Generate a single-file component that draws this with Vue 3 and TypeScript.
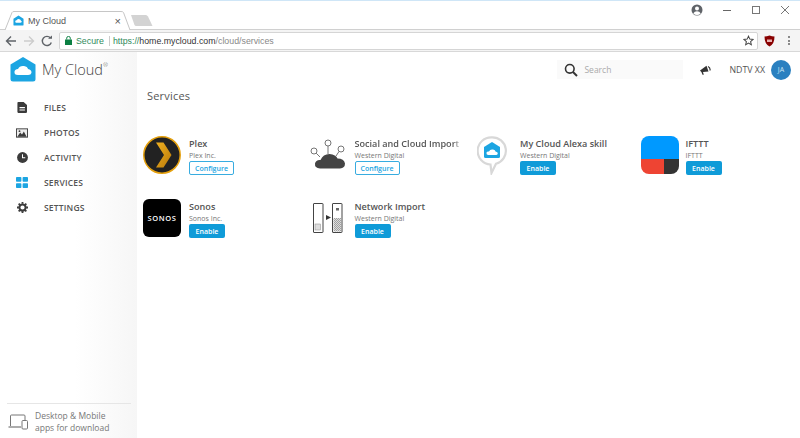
<script setup lang="ts">
interface Service {
  id: string
  title: string
  vendor: string
  action: 'Configure' | 'Enable'
}
const services: Service[] = [
  { id: 'plex', title: 'Plex', vendor: 'Plex Inc.', action: 'Configure' },
  { id: 'social', title: 'Social and Cloud Import', vendor: 'Western Digital', action: 'Configure' },
  { id: 'alexa', title: 'My Cloud Alexa skill', vendor: 'Western Digital', action: 'Enable' },
  { id: 'ifttt', title: 'IFTTT', vendor: 'IFTTT', action: 'Enable' },
  { id: 'sonos', title: 'Sonos', vendor: 'Sonos Inc.', action: 'Enable' },
  { id: 'network', title: 'Network Import', vendor: 'Western Digital', action: 'Enable' },
]
const nav = [
  { id: 'files', label: 'FILES' },
  { id: 'photos', label: 'PHOTOS' },
  { id: 'activity', label: 'ACTIVITY' },
  { id: 'services', label: 'SERVICES' },
  { id: 'settings', label: 'SETTINGS' },
]
</script>

<template>
  <div class="window">
    <div class="tabstrip">
      <div class="tab">
        <svg class="tab-shape" width="127" height="19" viewBox="0 0 127 19">
          <path d="M1 19 L8 1.500 Q8.500 .5 10 .5 L117 .5 Q119 .5 119.500 1.500 L126 19 Z" fill="#fff" />
          <path d="M1 19 L8 1.500 Q8.500 .5 10 .5 L117 .5 Q119 .5 119.500 1.500 L126 19" fill="none" stroke="#c6c6c6" />
        </svg>
        <svg class="fav" width="11" height="11" viewBox="0 0 24 24">
          <path d="M12 1 L23 8 V21 Q23 23 21 23 H3 Q1 23 1 21 V8 Z" fill="#1ca5e2" />
          <path d="M7 17 Q4 16 5 13 Q6 11 8 11.500 Q10 8 14 9 Q17 10 17 12 Q20 13 19 15.500 Q18 17 16 17 Z" fill="#fff" />
        </svg>
        <span class="tab-title">My Cloud</span>
        <span class="tab-x">×</span>
      </div>
      <svg class="newtab" width="22" height="11" viewBox="0 0 22 11"><path d="M0 0H15Q16 0 17 1.500L21.500 11H5Q4 11 3.500 10Z" fill="#d3d3d3" /></svg>
      <div class="win-controls">
        <svg width="12" height="12" viewBox="0 0 24 24"><circle cx="12" cy="12" r="11" fill="#5f6368" /><circle cx="12" cy="9" r="4" fill="#fff" /><path d="M4.500 19 Q7 14.500 12 14.500 Q17 14.500 19.500 19 Q16 22 12 22 Q8 22 4.500 19Z" fill="#fff" /></svg>
        <svg class="wc-min" width="10" height="10" viewBox="0 0 10 10"><path d="M1 5.500H9" stroke="#666" /></svg>
        <svg class="wc-max" width="10" height="10" viewBox="0 0 10 10"><rect x="1.500" y="1.500" width="7" height="7" fill="none" stroke="#777" /></svg>
        <svg class="wc-close" width="10" height="10" viewBox="0 0 10 10"><path d="M1 1L9 9M9 1L1 9" stroke="#777" /></svg>
      </div>
    </div>
    <div class="toolbar">
      <svg class="tb-icon" width="12" height="12" viewBox="0 0 12 12"><path d="M11 6H2M6 1.500L1.500 6L6 10.500" fill="none" stroke="#5f6368" stroke-width="1.400" /></svg>
      <svg class="tb-icon" width="12" height="12" viewBox="0 0 12 12"><path d="M1 6H10M6 1.500L10.500 6L6 10.500" fill="none" stroke="#ccc" stroke-width="1.400" /></svg>
      <svg class="tb-icon" width="12" height="12" viewBox="0 0 12 12"><path d="M10.300 7.500A4.600 4.600 0 1 1 9.500 3" fill="none" stroke="#5f6368" stroke-width="1.400" /><path d="M7 3.800H11V0.400Z" fill="#5f6368" /></svg>
      <div class="omnibox">
        <svg class="lock" width="7" height="9" viewBox="0 0 7 9"><path d="M0 3.500H7V9H0Z" fill="#0b8043" /><path d="M1.700 3.500V2.200A1.800 1.800 0 0 1 5.300 2.200V3.500" fill="none" stroke="#0b8043" /></svg>
        <span class="secure">Secure</span>
        <span class="omni-sep"></span>
        <span class="url"><span class="https">https://</span><span class="host">home.mycloud.com</span><span class="path">/cloud/services</span></span>
        <svg class="star" width="11" height="11" viewBox="0 0 24 24"><path d="M12 2.500L14.900 9L22 9.700L16.600 14.400L18.200 21.400L12 17.700L5.800 21.400L7.400 14.400L2 9.700L9.100 9Z" fill="none" stroke="#444" stroke-width="2.200" /></svg>
      </div>
      <svg class="ublock" width="11" height="12" viewBox="0 0 11 12"><path d="M.5 1.500Q3 1.500 5.500 .5Q8 1.500 10.500 1.500Q10.500 9 5.500 11.500Q.5 9 .5 1.500Z" fill="#800" /><rect x="3" y="4.500" width="5" height="2.500" fill="#e8b0b0" /></svg>
      <span class="kebab"><i></i><i></i><i></i></span>
    </div>

    <div class="app">
      <aside class="sidebar">
        <div class="brand">
          <svg width="26" height="25" viewBox="0 0 26 25">
            <path d="M13 0 L25.500 7.500 V22 Q25.500 24.500 23 24.500 H3 Q.5 24.500 .5 22 V7.500 Z" fill="#1ca5e2" />
            <path d="M8 18 Q4 18 4.500 14.500 Q5 12 8 12 Q9.500 8.500 14 9 Q17.500 9.500 18 12 Q21.500 12.500 21.500 15.500 Q21 18 18 18 Z" fill="#fff" />
          </svg>
          <span class="brand-name">My Cloud<sup>®</sup></span>
        </div>
        <nav class="nav">
          <div v-for="item in nav" :key="item.id" class="nav-item">
            <span class="nav-icon">
              <svg v-if="item.id === 'files'" width="10" height="11" viewBox="0 0 12 13"><path d="M1.500 0H8L12 3.500V12Q12 13 11 13H1.500Q.5 13 .5 12V1Q.5 0 1.500 0Z" fill="#3b3b3b" /><path d="M3 6H9.500V7.300H3ZM3 8.800H9.500V10.100H3Z" fill="#fff" /></svg>
              <svg v-else-if="item.id === 'photos'" width="13" height="10" viewBox="0 0 13 10"><rect x=".5" y=".5" width="12" height="9" fill="#eee" stroke="#3b3b3b" /><path d="M1.500 9L4.500 4.500L6.500 6.500L8.500 3.500L11.500 9Z" fill="#3b3b3b" /><circle cx="3.800" cy="3" r="1" fill="#3b3b3b" /></svg>
              <svg v-else-if="item.id === 'activity'" width="11" height="11" viewBox="0 0 12 12"><circle cx="6" cy="6" r="5.900" fill="#3b3b3b" /><path d="M6 2.500V6.300H9" fill="none" stroke="#fff" stroke-width="1.100" /></svg>
              <svg v-else-if="item.id === 'services'" width="12" height="11" viewBox="0 0 12 11"><rect x="0" y="0" width="5.400" height="4.800" rx=".8" fill="#1ca5e2" /><rect x="6.600" y="0" width="5.400" height="4.800" rx=".8" fill="#1ca5e2" /><rect x="0" y="6.200" width="5.400" height="4.800" rx=".8" fill="#1ca5e2" /><rect x="6.600" y="6.200" width="5.400" height="4.800" rx=".8" fill="#1ca5e2" /></svg>
              <svg v-else width="11" height="11" viewBox="0 0 12 12"><circle cx="6" cy="6" r="3.400" fill="none" stroke="#3b3b3b" stroke-width="2.200" /><path d="M6 0V2M6 10V12M0 6H2M10 6H12M1.800 1.800L3.200 3.200M8.800 8.800L10.200 10.200M1.800 10.200L3.200 8.800M8.800 3.200L10.200 1.800" stroke="#3b3b3b" stroke-width="2" /></svg>
            </span>
            <span class="nav-label">{{ item.label }}</span>
          </div>
        </nav>
        <div class="download">
          <svg width="21" height="16" viewBox="0 0 21 16"><path d="M2.500 12V2Q2.500 1 3.500 1H16Q17 1 17 2V6" fill="none" stroke="#777" /><path d="M.5 13H13" stroke="#777" stroke-width="1.200" /><rect x="14" y="6.500" width="5.500" height="8.500" rx="1" fill="none" stroke="#777" /></svg>
          <span class="download-text">Desktop &amp; Mobile<br />apps for download</span>
        </div>
      </aside>

      <main class="main">
        <header class="topbar">
          <div class="search">
            <svg width="14" height="14" viewBox="0 0 14 14"><circle cx="5.800" cy="5.800" r="4.300" fill="none" stroke="#333" stroke-width="1.600" /><path d="M9 9L13 13" stroke="#333" stroke-width="1.900" /></svg>
            <span class="search-text">Search</span>
          </div>
          <svg class="megaphone" width="11" height="10" viewBox="0 0 11 10"><path d="M0 5.500L6.500 .8L8.500 6.500L3 7L3.800 9.800H2.500L1.500 7.200Z" fill="#333" /><path d="M8 1.500Q10.500 2.500 10 5.500" fill="none" stroke="#333" stroke-width="1.200" /></svg>
          <span class="user">NDTV XX</span>
          <span class="avatar">JA</span>
        </header>
        <h1 class="heading">Services</h1>
        <section class="grid">
          <article v-for="s in services" :key="s.id" class="card" :class="'card-' + s.id">
            <div class="logo">
              <svg v-if="s.id === 'plex'" width="38" height="38" viewBox="0 0 38 38">
                <defs><linearGradient id="plexg" x1="0" y1="0" x2="1" y2="1"><stop offset="0" stop-color="#f0b020" /><stop offset="1" stop-color="#b97a0a" /></linearGradient></defs>
                <circle cx="19" cy="19" r="18.200" fill="#222" stroke="#e5a00d" stroke-width="1.500" />
                <path d="M13 6.500H20.500L28.500 19L20.500 31.500H13L21 19Z" fill="url(#plexg)" />
              </svg>
              <svg v-else-if="s.id === 'social'" width="38" height="36" viewBox="0 0 38 36">
                <g fill="none" stroke="#666" stroke-width=".9"><circle cx="5" cy="14" r="3" /><circle cx="19" cy="6" r="3" /><circle cx="32" cy="12" r="3" /><path d="M7.200 16.200L11 20M19 9V17M30 14.500L27 19" /></g>
                <path d="M11 31.500Q5.500 31 6 26.500Q7 22.500 11.500 23Q14 17 20.500 17Q27 17.500 28.500 21.500Q35 21.500 36 26.500Q36 31 31 31.500Z" fill="#444" />
              </svg>
              <svg v-else-if="s.id === 'alexa'" width="30" height="39" viewBox="0 0 30 39">
                <path d="M15 1.300A13.500 13.500 0 0 1 19 27.800L14.500 37L13.500 28.500A13.500 13.500 0 0 1 15 1.300Z" fill="#fff" stroke="#d8d8d8" stroke-width="2.200" />
                <path d="M15 6L23 11V20.500Q23 22 21.500 22H8.500Q7 22 7 20.500V11Z" fill="#1ca5e2" />
                <path d="M11 19Q9 18.500 9.500 16.500Q10.300 15 12 15.500Q13 13 16 13.500Q18.500 14 18.500 15.500Q21 16 20.800 17.800Q20.300 19 19 19Z" fill="#fff" />
              </svg>
              <div v-else-if="s.id === 'ifttt'" class="ifttt"><span class="i-blue"></span><span class="i-red"></span><span class="i-dark"></span></div>
              <div v-else-if="s.id === 'sonos'" class="sonos">SONOS</div>
              <svg v-else width="38" height="34" viewBox="0 0 38 34">
                <defs><pattern id="hatch" width="2" height="2" patternUnits="userSpaceOnUse"><rect width="2" height="2" fill="#ddd" /><path d="M0 2L2 0" stroke="#777" stroke-width=".6" /></pattern></defs>
                <rect x="4.500" y="3.500" width="9.500" height="29" rx=".5" fill="#fff" stroke="#444" />
                <rect x="6" y="24" width="5.500" height="6" fill="#ddd" stroke="#888" stroke-width=".5" />
                <path d="M17 15L22 17.500L17 20Z" fill="#333" />
                <rect x="23.500" y="3.500" width="9.500" height="29" rx=".5" fill="#fff" stroke="#444" />
                <rect x="24.500" y="18" width="7.500" height="13.500" fill="url(#hatch)" />
                <rect x="27" y="8" width="3" height="2.500" fill="#666" />
              </svg>
            </div>
            <div class="info">
              <div class="title">{{ s.title }}</div>
              <div class="vendor">{{ s.vendor }}</div>
              <button class="btn" :class="s.action === 'Enable' ? 'btn-fill' : 'btn-line'">{{ s.action }}</button>
            </div>
          </article>
        </section>
      </main>
    </div>
  </div>
</template>

<style>
html, body { margin: 0; background: #fff; }
</style>

<style scoped>
.window { width: 800px; height: 438px; display: flex; flex-direction: column; overflow: hidden; font-family: "Open Sans", "Liberation Sans", sans-serif; color: #444; }
.tabstrip { flex: none; display: flex; align-items: flex-end; border-top: 1px solid #cfe6f7; border-bottom: 1px solid #d0d0d0; position: relative; box-sizing: border-box; height: 30px; padding-left: 4px; }
.tab { width: 127px; height: 19px; position: relative; display: flex; align-items: center; padding-left: 9px; box-sizing: border-box; margin-bottom: -1px; }
.tab-shape { position: absolute; left: 0; top: 0; overflow: visible; }
.fav { position: relative; }
.tab-title { position: relative; margin-left: 4px; font: 9px "Liberation Sans", sans-serif; color: #555; flex: 1; }
.tab-x { position: relative; font: 11px "Liberation Sans", sans-serif; color: #555; margin-right: 10px; }
.newtab { margin: 0 0 3px 0; flex: none; }
.win-controls { margin-left: auto; align-self: flex-start; display: flex; align-items: center; margin-top: 3px; padding-right: 10px; }
.wc-min { margin-left: 19px; }
.wc-max { margin-left: 19px; }
.wc-close { margin-left: 19px; }
.toolbar { height: 22px; flex: none; display: flex; align-items: center; background: #f4f4f4; border-bottom: 1px solid #d8d8d8; box-sizing: border-box; padding-left: 5px; }
.tb-icon { margin-right: 5px; }
.tb-icon + .tb-icon { margin-left: 1px; }
.omnibox { width: 699px; height: 18px; margin-left: 1px; background: #fff; border: 1px solid #d5d5d5; border-radius: 2px; box-sizing: border-box; display: flex; align-items: center; padding: 0 3px 0 5px; font: 9px "Liberation Sans", sans-serif; }
.secure { color: #2f8a5b; margin-left: 4px; font-size: 8.800px; }
.omni-sep { width: 1px; height: 10px; background: #ccc; margin: 0 3px 0 5px; }
.https { color: #2f8a5b; }
.host { color: #333; }
.path { color: #888; }
.url { font-size: 8.800px; flex: 1; }
.ublock { margin-left: 6px; }
.kebab { margin-left: 13px; display: flex; flex-direction: column; gap: 1.500px; }
.kebab i { width: 2px; height: 2px; background: #666; border-radius: 50%; display: block; }
.app { flex: 1; display: flex; min-height: 0; }
.sidebar { width: 137px; flex: none; display: flex; flex-direction: column; background: linear-gradient(to right, #fff 55%, #f6f6f6); }
.brand { display: flex; align-items: center; height: 34px; padding-left: 10px; box-sizing: border-box; }
.brand-name { margin-left: 6px; font-size: 14.500px; font-weight: 300; color: #444; }
.brand-name sup { font-size: 6px; vertical-align: 8px; line-height: 0; }
.nav { margin-top: 9px; display: flex; flex-direction: column; }
.nav-item { height: 25px; display: flex; align-items: center; }
.nav-icon { width: 12px; margin: 0 16px; display: flex; justify-content: center; }
.nav-label { font-size: 8.500px; font-weight: 600; color: #555; letter-spacing: .2px; }
.download { margin-top: auto; margin-left: 7px; margin-right: 6px; border-top: 1px solid #e6e6e6; height: 35px; display: flex; align-items: center; gap: 6px; padding: 2px 0 0 1px; box-sizing: border-box; }
.download-text { font-size: 8.500px; line-height: 12px; color: #777; }
.main { flex: 1; min-width: 0; padding-left: 6px; }
.topbar { height: 36px; display: flex; align-items: center; box-sizing: border-box; padding: 0 9px 1px 0; justify-content: flex-end; }
.search { width: 126px; height: 19px; background: #fafafa; display: flex; align-items: center; box-sizing: border-box; padding-left: 7px; }
.search-text { margin-left: 6px; font-size: 8.500px; color: #aaa; }
.megaphone { margin-left: 17px; }
.user { margin-left: 18px; font-size: 8.800px; color: #555; }
.avatar { margin-left: 6px; width: 20px; height: 20px; border-radius: 50%; background: #2a80c0; color: #cfe6f5; font-size: 7px; display: flex; align-items: center; justify-content: center; }
.heading { margin: 1px 0 0 4px; font-size: 11px; line-height: 14px; font-weight: 400; color: #555; letter-spacing: .2px; }
.grid { margin-top: 33px; display: grid; grid-template-columns: 165.500px 165.500px 165.500px 150px; grid-auto-rows: 63px; }
.card { display: flex; }
.logo { width: 46px; height: 38px; flex: none; }
.card-social .logo { margin-top: 1px; height: 37px; }
.card-network .logo { margin-top: 1px; height: 37px; }
.card-alexa .logo svg { margin-left: 3px; }
.card-ifttt .ifttt { margin-left: 1.500px; }
.info { width: 107px; min-width: 0; position: relative; padding-top: 1px; }
.card-social .title { -webkit-mask-image: linear-gradient(to right, #000 92%, transparent); mask-image: linear-gradient(to right, #000 92%, transparent); }
.title { font-size: 9.100px; line-height: 13px; font-weight: 600; color: #555; white-space: nowrap; }
.vendor { font-size: 7px; line-height: 10px; color: #777; margin-top: 1px; white-space: nowrap; }
.btn { display: block; margin-top: 0; height: 14px; padding: 0; border-radius: 2px; font: 600 7px "Open Sans", sans-serif; box-sizing: border-box; }
.btn-fill { width: 36px; background: #0f9bd8; border: 0; color: #fff; }
.btn-line { width: 45px; background: #fff; border: 1px solid #38ace0; color: #1ca5e2; }
.ifttt { width: 38px; height: 38px; border-radius: 8px; overflow: hidden; display: grid; grid-template-columns: 23px 15px; grid-template-rows: 23px 15px; }
.i-blue { grid-column: 1 / 3; background: #0099ff; }
.i-red { background: #ee4433; }
.i-dark { background: #333; }
.sonos { width: 38px; height: 38px; border-radius: 6px; background: #000; color: #fff; font-size: 7.500px; font-weight: 600; letter-spacing: .6px; display: flex; align-items: center; justify-content: center; }
</style>
